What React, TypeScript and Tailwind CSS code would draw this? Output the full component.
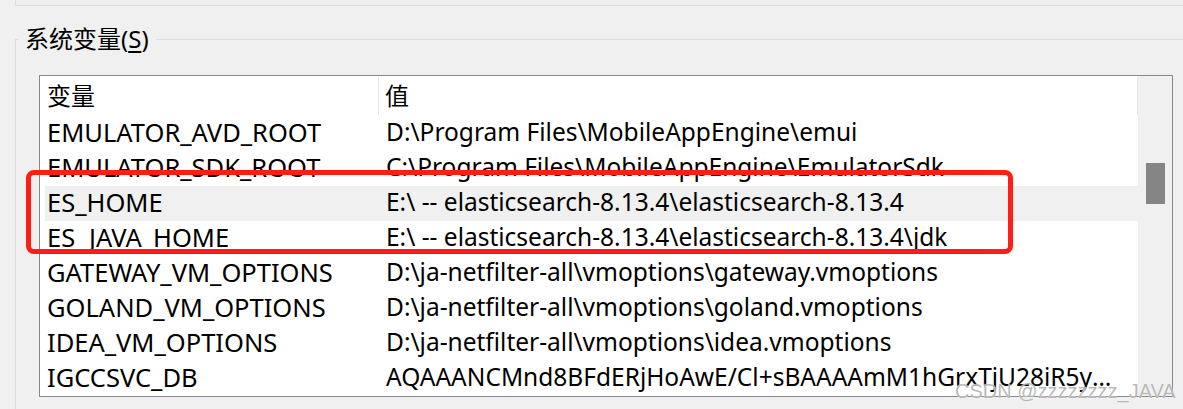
import React from 'react';

const rows = [
  { name: 'EMULATOR_AVD_ROOT', value: 'D:\\Program Files\\MobileAppEngine\\emui' },
  { name: 'EMULATOR_SDK_ROOT', value: 'C:\\Program Files\\MobileAppEngine\\EmulatorSdk' },
  { name: 'ES_HOME', value: 'E:\\ -- elasticsearch-8.13.4\\elasticsearch-8.13.4', selected: true },
  { name: 'ES_JAVA_HOME', value: 'E:\\ -- elasticsearch-8.13.4\\elasticsearch-8.13.4\\jdk' },
  { name: 'GATEWAY_VM_OPTIONS', value: 'D:\\ja-netfilter-all\\vmoptions\\gateway.vmoptions' },
  { name: 'GOLAND_VM_OPTIONS', value: 'D:\\ja-netfilter-all\\vmoptions\\goland.vmoptions' },
  { name: 'IDEA_VM_OPTIONS', value: 'D:\\ja-netfilter-all\\vmoptions\\idea.vmoptions' },
  { name: 'IGCCSVC_DB', value: 'AQAAANCMnd8BFdERjHoAwE/Cl+sBAAAAmM1hGrxTjU28iR5yQAAAAACAAAAAAAQZgAAAAEAACAAAAB' },
];

export default function App() {
  return (
    <div className="relative w-[1183px] h-[409px] overflow-hidden bg-[#f0f0f0] text-black font-['Noto_Sans','Noto_Sans_CJK_SC',sans-serif]">
      {/* bottom of the user variables box above */}
      <div className="ml-[15px] h-[6px] border-l border-b border-[#dcdcdc]" />

      <fieldset className="mt-[20px] ml-[15px] h-[400px] border-l border-t border-[#dcdcdc]">
        <legend className="ml-[2px] px-[7px] text-[24px] leading-[26px] whitespace-nowrap">
          系统变量(<span className="underline underline-offset-[3px]">S</span>)
        </legend>

        <div className="ml-[23px] mt-[23px] w-[1134px] h-[322px] border border-[#828790] bg-white flex overflow-hidden">
          <div className="flex-1 min-w-0 flex flex-col">
            {/* header */}
            <div className="h-[40px] shrink-0 flex items-center text-[24px]">
              <div className="w-[339px] h-[38px] flex items-center pl-[7px] border-r border-[#e5e5e5]">变量</div>
              <div className="flex-1 h-[38px] flex items-center pl-[6px] border-r border-[#e5e5e5]">值</div>
            </div>
            {rows.map((r) => (
              <div
                key={r.name}
                className={`h-[35px] shrink-0 flex items-center pb-[3px] leading-[32px] ${r.selected ? 'bg-[#f0f0f0] ml-[5px]' : ''}`}
              >
                <div className={`${r.selected ? 'w-[335px] pl-[2px]' : 'w-[340px] pl-[7px]'} shrink-0 whitespace-nowrap text-[25.5px]`}>{r.name}</div>
                <div className="flex-1 min-w-0 pl-[6px] pr-[8px] truncate text-[24.5px]">{r.value}</div>
              </div>
            ))}
          </div>

          {/* scrollbar */}
          <div className="w-[34px] shrink-0 bg-[#f0f0f0] flex justify-center pt-[87px]">
            <div className="w-[19px] h-[41px] bg-[#858585]" />
          </div>
        </div>
      </fieldset>

      {/* red highlight box */}
      <div className="absolute left-[26px] top-[170px] w-[987px] h-[84px] border-[5px] border-[#ff1d16] rounded-[8px]" />

      {/* watermark */}
      <div className="absolute left-[955px] top-[379px] whitespace-nowrap text-[20px] leading-[24px] font-['Liberation_Sans',sans-serif] text-[#9a9a9a]/70 [text-shadow:0_0_1px_#ffffff]">
        CSDN @zzzzzzzz_JAVA
      </div>
    </div>
  );
}
